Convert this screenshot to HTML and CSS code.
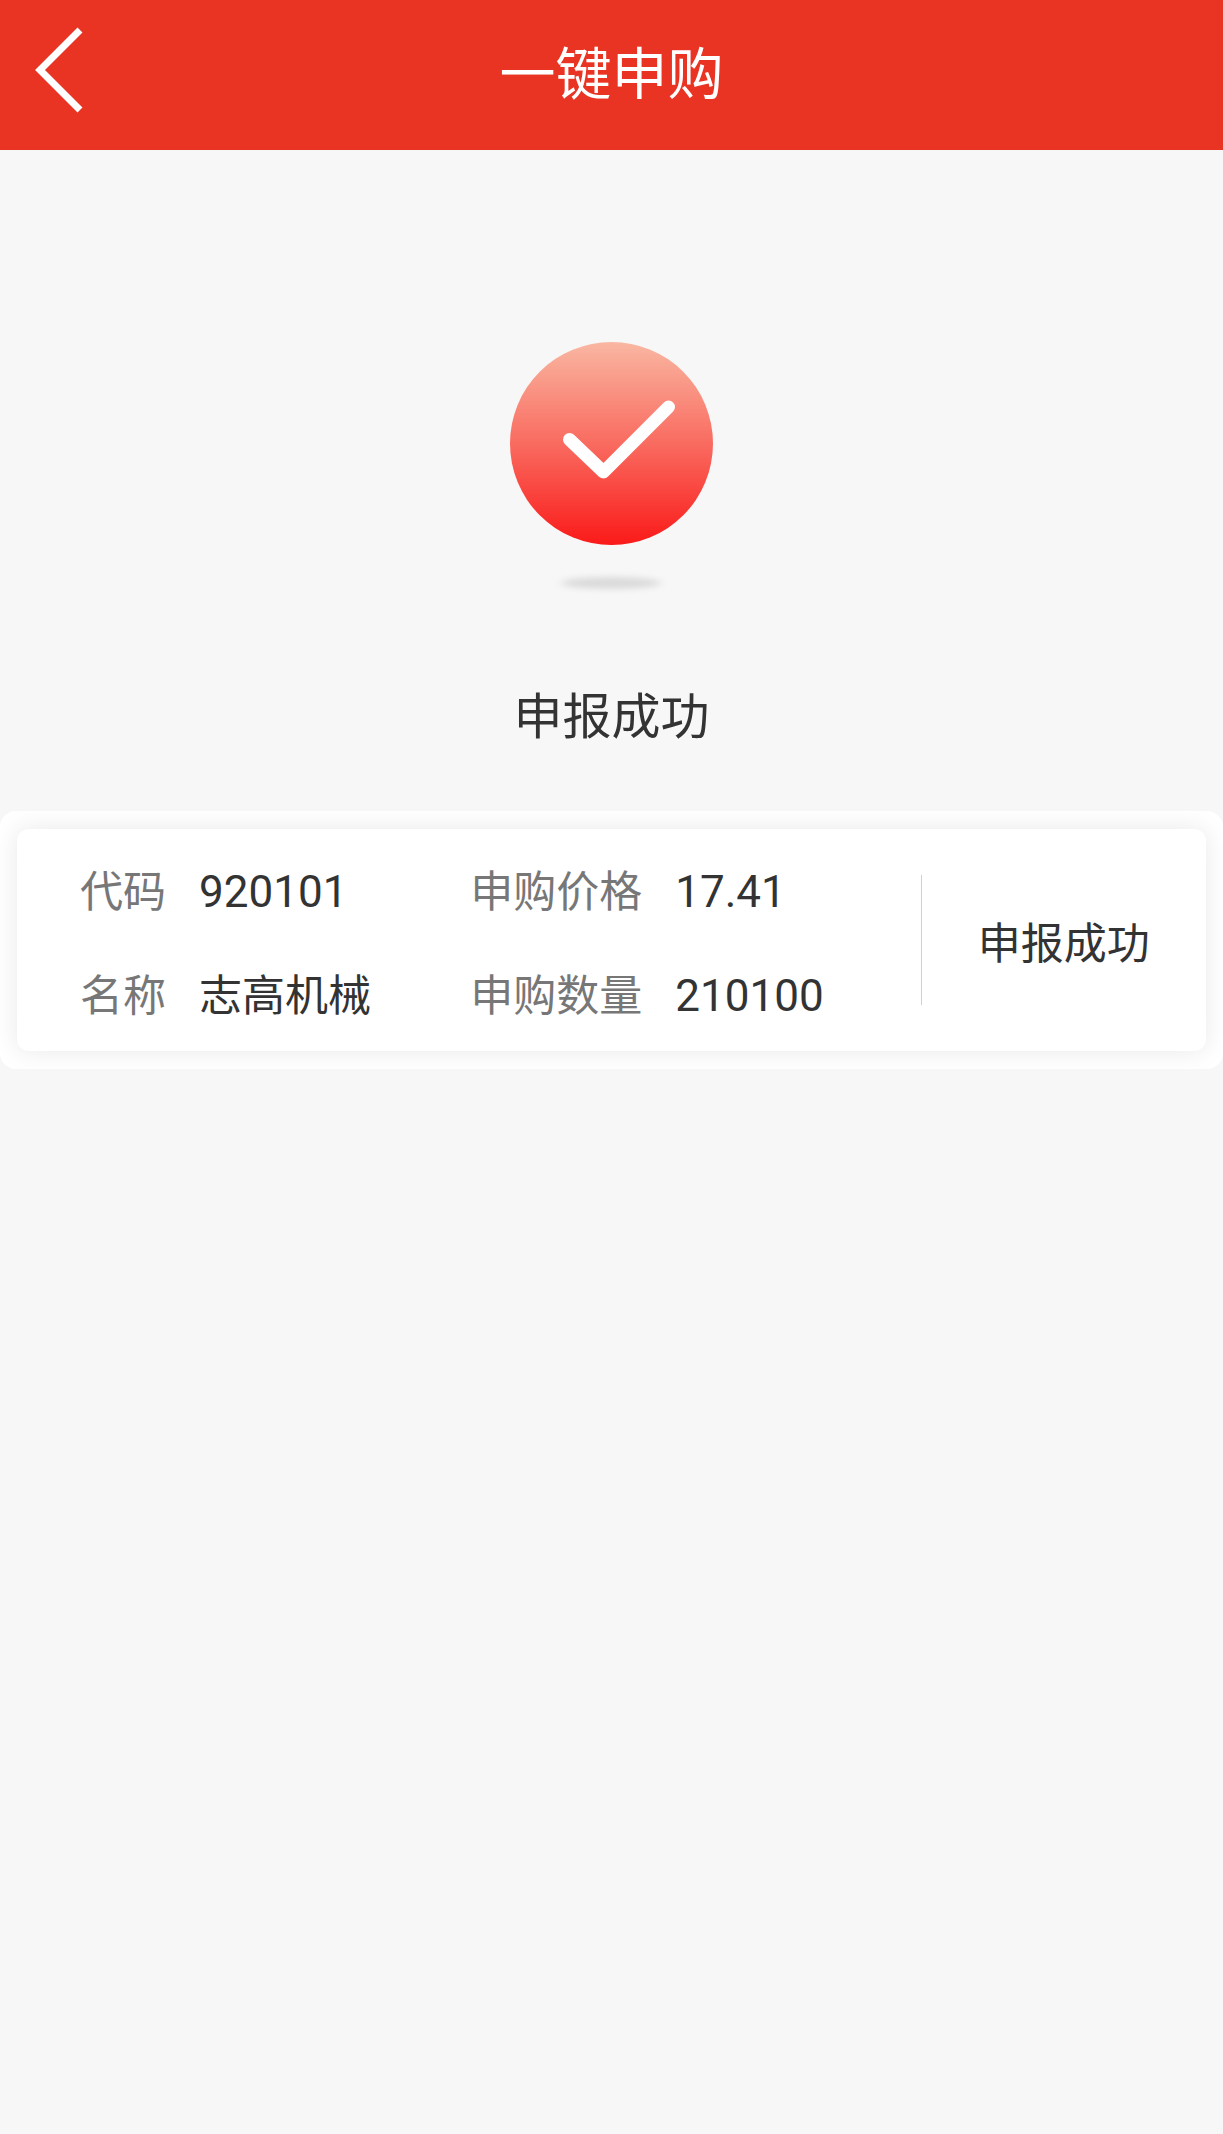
FILE: index.html
```html
<!DOCTYPE html>
<html lang="zh-CN">
<head>
    <meta charset="UTF-8">
    <meta name="viewport" content="width=device-width, initial-scale=1.0">
    <title>一键申购</title>
    <link rel="stylesheet" href="styles.css">
</head>
<body>
    <header class="navbar">
        <button class="back" type="button" aria-label="返回">
            <svg width="60" height="90" viewBox="0 0 60 90" fill="none" stroke="#fff" stroke-width="7">
                <path d="M50 5 L10 45 L50 85"/>
            </svg>
        </button>
        <h1>一键申购</h1>
    </header>

    <main>
        <section class="success">
            <svg class="success-icon" width="206" height="260" viewBox="0 0 206 260">
                <defs>
                    <linearGradient id="circleFill" x1="0" y1="0" x2="0" y2="1">
                        <stop offset="0" stop-color="#f9b7a2"/>
                        <stop offset="0.5" stop-color="#f96b60"/>
                        <stop offset="1" stop-color="#fa1a19"/>
                    </linearGradient>
                    <filter id="soft" x="-20%" y="-100%" width="140%" height="300%">
                        <feGaussianBlur stdDeviation="4 3"/>
                    </filter>
                </defs>
                <circle cx="102.5" cy="103.5" r="101.5" fill="url(#circleFill)"/>
                <path d="M60.5 99.5 L94.5 132 L159.5 67" fill="none" stroke="#fff" stroke-width="13" stroke-linecap="round" stroke-linejoin="round"/>
                <ellipse cx="102" cy="243" rx="50" ry="6" fill="#dadada" filter="url(#soft)"/>
            </svg>
            <h2>申报成功</h2>
        </section>

        <div class="card-frame">
            <section class="card">
                <dl class="details">
                    <div class="item">
                        <dt>代码</dt>
                        <dd class="num">920101</dd>
                    </div>
                    <div class="item">
                        <dt>申购价格</dt>
                        <dd class="num">17.41</dd>
                    </div>
                    <div class="item">
                        <dt>名称</dt>
                        <dd>志高机械</dd>
                    </div>
                    <div class="item">
                        <dt>申购数量</dt>
                        <dd class="num">210100</dd>
                    </div>
                </dl>
                <p class="status">申报成功</p>
            </section>
        </div>
    </main>
</body>
</html>
```

FILE: styles.css
```css
* {
    box-sizing: border-box;
}
body {
    margin: 0;
    background: #f7f7f7;
    color: #333;
    font-family: "Noto Sans CJK SC", sans-serif;
    font-size: 43px;
}
h1, h2, p, dl, dd {
    margin: 0;
    font-weight: 400;
}
.navbar {
    display: grid;
    grid-template-columns: 120px 1fr 120px;
    align-items: center;
    height: 150px;
    padding-bottom: 10px;
    background: #e93323;
    color: #fff;
}
.navbar h1 {
    font-size: 56px;
    line-height: 80px;
    text-align: center;
}
.back {
    padding: 0 0 0 30px;
    border: none;
    background: none;
    text-align: left;
    cursor: pointer;
}
.back svg {
    display: block;
}
.success {
    display: flex;
    flex-direction: column;
    align-items: center;
    gap: 77px;
    padding: 190px 0 62px;
}
.success-icon {
    display: block;
}
.success h2 {
    font-size: 49px;
    line-height: 72px;
}
.card-frame {
    padding: 18px 17px;
    border-radius: 16px;
    background: #fff;
    overflow: hidden;
}
.card {
    display: flex;
    align-items: center;
    padding: 27px 0;
    border-radius: 12px;
    background: #fff;
    box-shadow: 0 0 24px 2px rgba(0, 0, 0, 0.08);
}
.details {
    flex: 1;
    display: grid;
    grid-template-columns: 390fr 450fr;
    row-gap: 40px;
    padding-left: 63px;
}
.item {
    display: flex;
    align-items: baseline;
    gap: 33px;
    height: 64px;
    line-height: 64px;
}
dt {
    color: #777;
}
.num {
    font-family: Roboto, "Noto Sans CJK SC", sans-serif;
    font-size: 44px;
}
.status {
    width: 24%;
    border-left: 1px solid #d0d0d0;
    line-height: 130px;
    text-align: center;
}
```
